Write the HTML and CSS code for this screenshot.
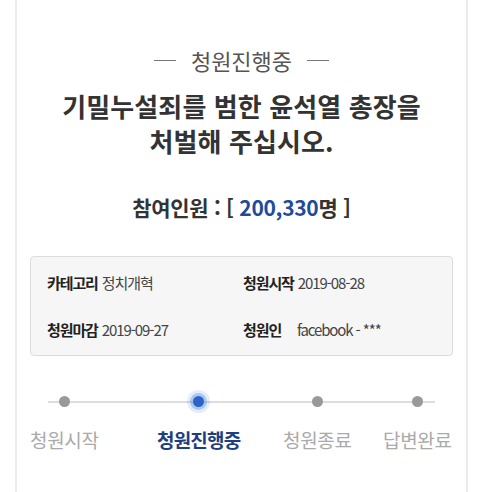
FILE: index.html
```html
<!DOCTYPE html>
<html lang="ko">
<head>
<meta charset="utf-8">
<title>청원진행중</title>
<link rel="stylesheet" href="styles.css">
</head>
<body>
<div class="page">
  <div class="status"><span class="status-text">청원진행중</span></div>
  <h1 class="title">기밀누설죄를 범한 윤석열 총장을<br>처벌해 주십시오.</h1>
  <p class="count">참여인원 : [ <span class="count-num">200,330</span>명 ]</p>
  <div class="info">
    <div class="info-item"><span class="info-label">카테고리</span><span class="info-value">정치개혁</span></div>
    <div class="info-item"><span class="info-label">청원시작</span><span class="info-value">2019-08-28</span></div>
    <div class="info-item"><span class="info-label">청원마감</span><span class="info-value">2019-09-27</span></div>
    <div class="info-item"><span class="info-label wide">청원인</span><span class="info-value">facebook - ***</span></div>
  </div>
  <div class="steps">
    <div class="step"><span class="dot"></span><span class="step-label">청원시작</span></div>
    <div class="step active"><span class="dot"></span><span class="step-label">청원진행중</span></div>
    <div class="step"><span class="dot"></span><span class="step-label">청원종료</span></div>
    <div class="step"><span class="dot"></span><span class="step-label">답변완료</span></div>
  </div>
</div>
</body>
</html>
```
FILE: styles.css
```css
html, body {
  margin: 0;
  padding: 0;
  background: #fff;
}
body {
  font-family: "Noto Sans CJK KR", "Noto Sans", sans-serif;
  color: #333;
}
.page {
  box-sizing: border-box;
  margin-left: 15px;
  width: 453px;
  height: 492px;
  overflow: hidden;
  border-left: 2px solid #ececec;
  border-right: 2px solid #ececec;
  padding: 45px 13px 0;
}
.status {
  display: flex;
  justify-content: center;
  align-items: center;
  height: 30px;
  font-size: 22px;
  color: #555;
}
.status::before, .status::after {
  content: "";
  display: block;
  width: 22px;
  height: 1px;
  background: #777;
}
.status-text {
  margin: 0 15px;
  line-height: 30px;
}
.title {
  margin: 13px 0 0;
  text-align: center;
  font-size: 26px;
  font-weight: 700;
  line-height: 35px;
  letter-spacing: 0.1px;
  color: #333;
}
.count {
  margin: 34px 0 0;
  text-align: center;
  font-size: 21px;
  font-weight: 700;
  line-height: 30px;
  letter-spacing: -0.3px;
  color: #333;
}
.count-num {
  color: #1f4b9b;
}
.info {
  margin-top: 34px;
  border: 1px solid #dcdcdc;
  border-radius: 4px;
  background: #f6f6f6;
  padding: 16px 16px 15px;
  display: grid;
  grid-template-columns: 196px 1fr;
  row-gap: 27px;
  font-size: 15px;
  line-height: 20px;
  letter-spacing: -1.1px;
}
.info-item {
  display: flex;
  white-space: nowrap;
}
.info-label {
  font-weight: 700;
  color: #222;
  margin-right: 4px;
}
.info-label.wide {
  min-width: 50px;
}
.info-value {
  color: #444;
}
.steps {
  position: relative;
  margin-top: 35px;
  display: grid;
  grid-template-columns: 127px 126px 100px 70px;
}
.steps::before {
  content: "";
  position: absolute;
  left: 18px;
  right: 18px;
  top: 10px;
  height: 2px;
  background: #dddddd;
}
.step {
  position: relative;
  justify-self: start;
  display: flex;
  flex-direction: column;
  align-items: center;
}
.dot {
  width: 11px;
  height: 11px;
  margin: 5px 0 6px;
  border-radius: 50%;
  background: #999;
}
.step.active .dot {
  background: #2d63c8;
  box-shadow: 0 0 0 3px rgba(70, 130, 230, 0.35), 0 0 0 6px rgba(70, 130, 230, 0.14);
}
.step-label {
  margin-top: 14px;
  font-size: 19px;
  line-height: 26px;
  letter-spacing: -0.3px;
  color: #aaa;
  white-space: nowrap;
}
.step.active .step-label {
  font-weight: 700;
  color: #1e3f7f;
  letter-spacing: -0.8px;
}
```
